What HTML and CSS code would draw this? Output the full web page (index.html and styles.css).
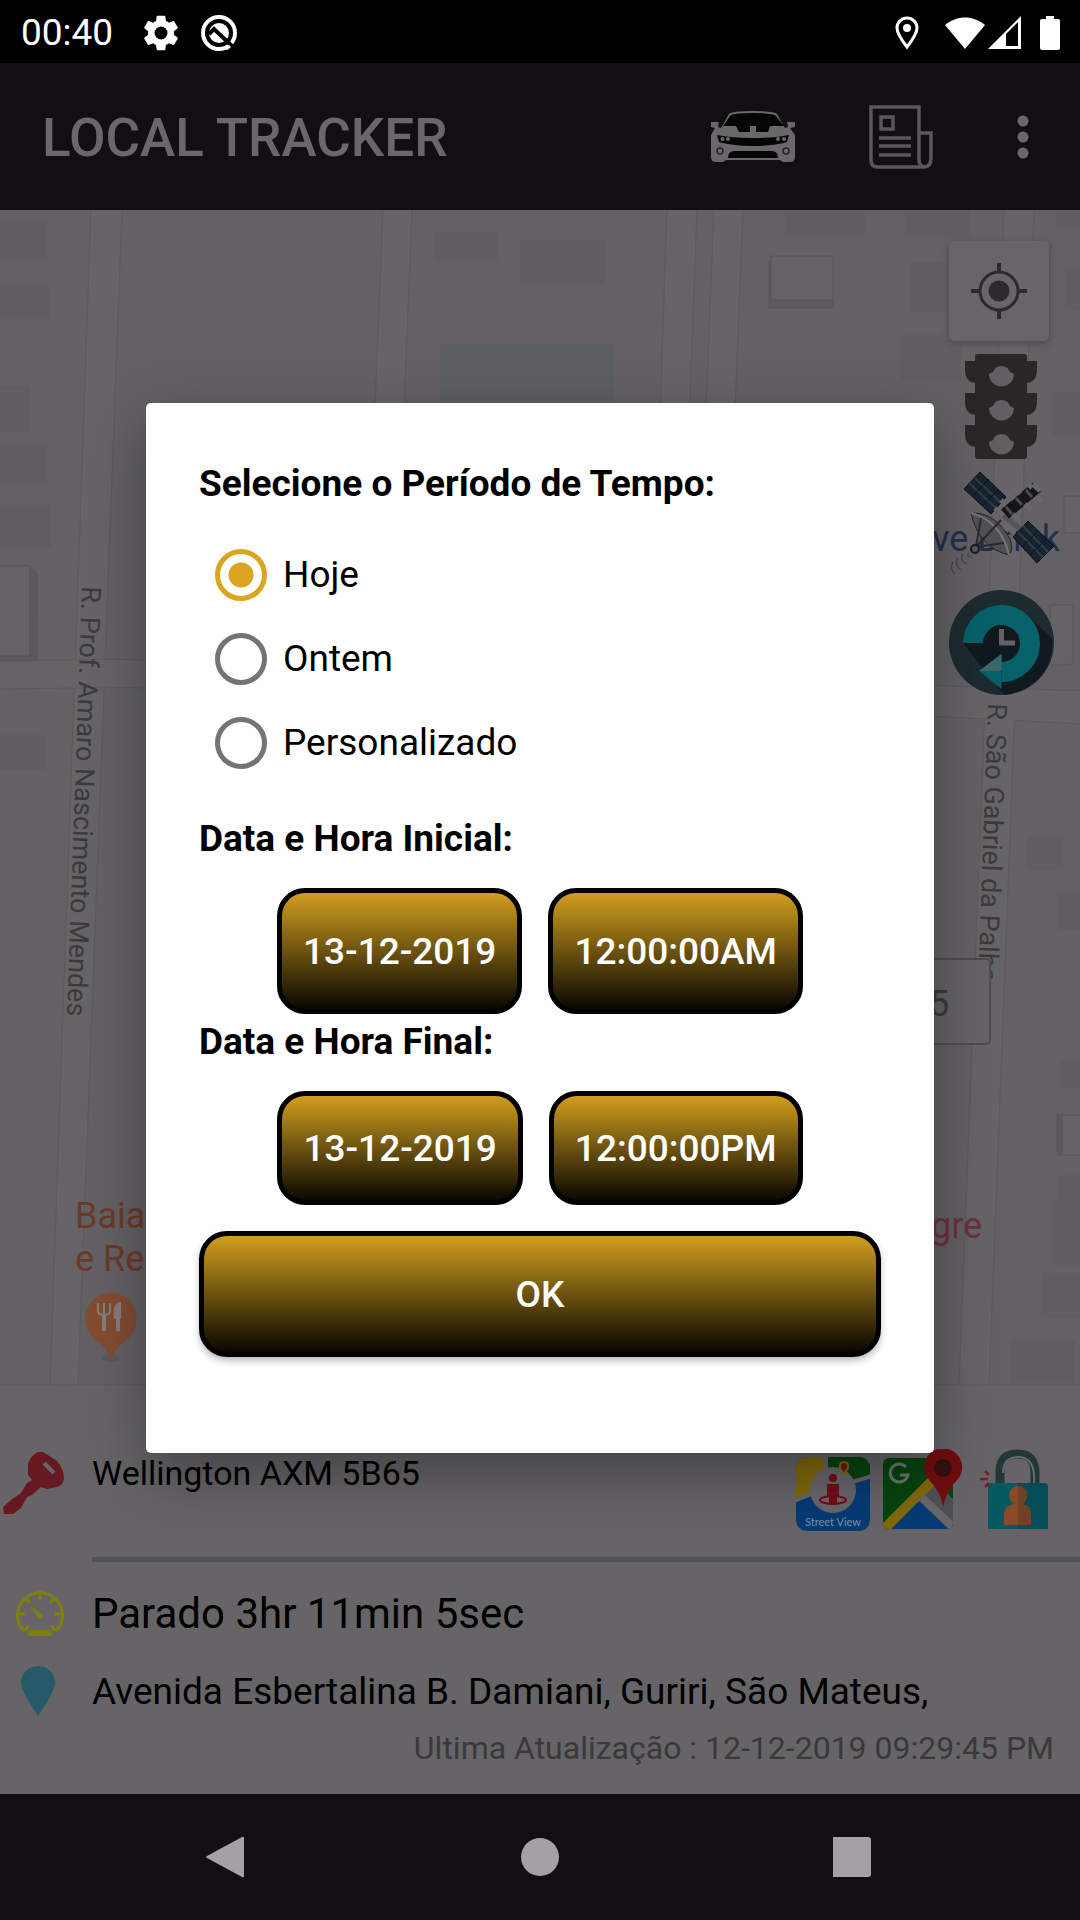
FILE: index.html
```html
<!DOCTYPE html>
<html lang="pt-BR">
<head>
    <meta charset="UTF-8">
    <meta name="viewport" content="width=device-width, initial-scale=1">
    <title>Local Tracker</title>
    <link rel="stylesheet" href="styles.css">
</head>
<body>
    <div class="status-bar">
        <span class="clock">00:40</span>
        <svg class="status-gear" width="36" height="36" viewBox="2 2 20 20" fill="#fff"><path d="M19.14 12.94c.04-.3.06-.61.06-.94s-.02-.64-.07-.94l2.03-1.58a.49.49 0 0 0 .12-.61l-1.92-3.32a.49.49 0 0 0-.59-.22l-2.39.96a7 7 0 0 0-1.62-.94l-.36-2.54a.48.48 0 0 0-.48-.41h-3.84a.48.48 0 0 0-.47.41l-.36 2.54c-.59.24-1.13.57-1.62.94l-2.39-.96a.48.48 0 0 0-.59.22L2.74 8.87a.48.48 0 0 0 .12.61l2.03 1.58c-.05.3-.09.63-.09.94s.02.64.07.94l-2.03 1.58a.49.49 0 0 0-.12.61l1.92 3.32c.12.22.37.29.59.22l2.39-.96c.5.38 1.03.7 1.62.94l.36 2.54c.05.24.24.41.48.41h3.84c.24 0 .44-.17.47-.41l.36-2.54a7 7 0 0 0 1.62-.94l2.39.96c.22.08.47 0 .59-.22l1.92-3.32a.48.48 0 0 0-.12-.61zM12 15.6a3.6 3.6 0 1 1 0-7.2 3.6 3.6 0 0 1 0 7.2z"/></svg>
        <svg class="status-q" width="38" height="38" viewBox="0 0 38 38">
            <circle cx="19" cy="19" r="16" fill="none" stroke="#fff" stroke-width="4"/>
            <circle cx="19" cy="19" r="10" fill="#fff"/>
            <path d="M9 20l5-5 18 17" fill="none" stroke="#000" stroke-width="4"/>
            <path d="M26 35l4-3" stroke="#fff" stroke-width="3"/>
        </svg>
        <div class="status-right">
            <svg width="24" height="34" viewBox="0 0 24 34" fill="none" stroke="#fff" stroke-width="3"><path d="M12 31C5 22 2 17 2 12a10 10 0 0 1 20 0c0 5-3 10-10 19z"/><circle cx="12" cy="12" r="4" fill="#fff" stroke="none"/></svg>
            <svg class="wifi" width="40" height="34" viewBox="0 0 40 34" fill="#fff"><path d="M20 33L0 9C12-1 28-1 40 9z"/></svg>
            <svg class="signal" width="33" height="34" viewBox="0 0 33 34"><path d="M33 0v33H0z" fill="#fff"/><path d="M18 18L30 6v24H18z" fill="#000"/></svg>
            <svg class="battery" width="20" height="34" viewBox="0 0 20 34" fill="#fff"><path d="M6 0h8v3h4a2 2 0 0 1 2 2v27a2 2 0 0 1-2 2H2a2 2 0 0 1-2-2V5a2 2 0 0 1 2-2h4z"/></svg>
        </div>
    </div>

    <div class="screen">
        <header class="app-bar">
            <h1>LOCAL TRACKER</h1>
            <button class="icon-button car" type="button" aria-label="Veículos">
                <svg width="84" height="52" viewBox="0 0 84 52">
                    <path d="M10 17L18 3Q20 0 42 0t24 3l8 14 3-1-1-5h8v5l-5 1 5 7v22q0 5-5 5H72l-3-2H15l-3 2H5q-5 0-5-5V24l4-7-4-1v-5h8l-1 5z" fill="#69676a"/>
                    <path d="M12 15l7-10q2-3 23-3t23 3l8 10H59l-2 6H45v-6h-6v6H28l-3-6z" fill="#060506"/>
                    <path d="M6 24q14 3 36 3t36-3l-2 7q-14 4-34 4T8 31z" fill="#060506"/>
                    <path d="M17 47q0-8 8-7h34q8-1 8 7z" fill="#060506"/>
                    <g fill="#69676a"><circle cx="11.500" cy="28" r="2"/><circle cx="17" cy="28" r="2"/><circle cx="67" cy="28" r="2"/><circle cx="73" cy="28" r="2"/></g>
                    <g fill="none" stroke="#252426" stroke-width="1.500"><circle cx="9" cy="40" r="3"/><circle cx="75" cy="40" r="3"/></g>
                </svg>
            </button>
            <button class="icon-button news" type="button" aria-label="Relatórios">
                <svg width="64" height="64" viewBox="0 0 64 64" fill="none" stroke="#59575a" stroke-width="3.500">
                    <path d="M2 2h48v52q0 8 6 8H9q-7 0-7-7z"/>
                    <path d="M50 28h12v25q0 9-7 9"/>
                    <rect x="12" y="12" width="12" height="12"/>
                    <path d="M10 33h32M10 41h32M10 50h32"/>
                </svg>
            </button>
            <button class="icon-button more" type="button" aria-label="Mais opções">
                <svg width="12" height="44" viewBox="0 0 12 44" fill="#69676a"><circle cx="6" cy="6" r="5.500"/><circle cx="6" cy="22" r="5.500"/><circle cx="6" cy="38" r="5.500"/></svg>
            </button>
        </header>

        <section class="map">
            <svg class="map-canvas" viewBox="0 210 1080 1226" preserveAspectRatio="xMidYMin slice">
                <!-- blocks -->
                <g fill="#605e61">
                    <path d="M0 220h47v40H0zM0 284h49v35H0zM0 386h30v46H0zM0 444h47v40H0zM0 505h51v43H0zM0 735h46v35H0z"/>
                    <path d="M434 232h64v28h-64zM520 240h85v45h-85zM785 210h80v25h-80zM905 210h65v27h-65zM910 262h42v50h-42zM900 335h62v45h-62z"/>
                    <path d="M1056 210h24v18h-24zM1065 268h15v42h-15zM1052 392h28v45h-28z"/>
                    <path d="M1027 836h36v34h-36zM1057 892h23v38h-23zM1060 1060h20v28h-20zM1057 1175h23v90h-28v-65h5zM1041 1273h39v45h-39zM1010 1340h65v43h-65z"/>
                </g>
                <path d="M440 344h175v59H440z" fill="#5e5f60"/>
                <!-- roads -->
                <g fill="#666467" stroke="#5c5a5d">
                    <path d="M91 209L50 1385h28L122 209zM383 209l-12 300h29l12-300zM667 209l-10 300h29l11-300zM714 209l-12 300h29l12-300zM1004 209l-45 1176h30l45-1176z"/>
                    <path d="M-2 660h81l24-1 380 10 600 22v33L700 704 105 687l-25 1-82 1z"/>
                </g>
                <path d="M80 661h26v25H80zM986 692h28v30h-28z" fill="#666467"/>
                <path d="M0 1386h1080v50H0z" fill="#666467"/>
                <path d="M0 1385h50M78 1385h881M989 1385h91" stroke="#5c5a5d"/>
                <!-- raised buildings -->
                <g fill="#656366" stroke="#59575a">
                    <path d="M769 260v48h63l2-7" fill="#5b595c"/>
                    <path d="M771 256h62v44h-62z"/>
                    <path d="M30 567l7 6v48H0v-5h30z" fill="#5b595c"/>
                    <path d="M30 567l7 6v87l-2 1H0v-5h30z" fill="#5b595c"/>
                    <path d="M-1 566h31v90H-1zM1064 496h20v37h-20zM1050 605h23v58l-4 2h-19zM1062 1115h20v40h-20z"/>
                    <path d="M1057 1115h5v40h-5z" fill="#5b595c"/>
                </g>
                <g class="street">
                    <text transform="translate(82 586) rotate(92)">R. Prof. Amaro Nascimento Mendes</text>
                    <text transform="translate(988 703) rotate(92)">R. São Gabriel da Palha</text>
                </g>
                <path d="M880 959h106q4 0 4 4v77q0 4-4 4H880z" fill="#656366" stroke="#4e4c4f" stroke-width="2"/>
                <text class="place marker-title" x="929" y="1016">5</text>
                <text class="place bar" x="932" y="551">ve Drink</text>
                <text class="place shop" x="931" y="1238">gre</text>
                <text class="place food" x="75" y="1228">Baia</text>
                <text class="place food" x="75" y="1271">e Re</text>
                <ellipse cx="111" cy="1358" rx="9" ry="4" fill="#5c5a5c"/>
                <path d="M111 1361q-3-12-12-19a26 26 0 1 1 24 0q-9 7-12 19z" fill="#834c31"/>
                <g stroke="#827e80" fill="none" stroke-width="2"><path d="M98 1303v8q0 4 6 4t6-4v-8M104 1303v12"/><path d="M104 1315v16M118 1318v13" stroke-width="4"/><path d="M120 1303v15h-5q-2-13 5-15z" fill="#827e80"/></g>
            </svg>

            <div class="map-tools">
                <button class="tool locate" type="button" aria-label="Minha localização">
                    <svg width="56" height="56" viewBox="0 0 56 56" fill="none" stroke="#2c2a2d" stroke-width="4"><circle cx="28" cy="28" r="19" stroke-width="3"/><circle cx="28" cy="28" r="10.500" fill="#2c2a2d" stroke="none"/><path d="M28 0v8M28 48v8M0 28h8M48 28h8"/></svg>
                </button>
                <button class="tool" type="button" aria-label="Trânsito">
                    <svg width="105" height="105" viewBox="0 0 105 105">
                        <path d="M26 3q0-3 3-3h46q3 0 3 3v4h10v8q0 13-10 14v10h10v8q0 13-10 14v10h10v8q0 13-10 14v9q0 3-3 3H29q-3 0-3-3v-9q-10-1-10-14v-8h10V61q-10-1-10-14v-8h10V29Q16 28 16 15V7h10z" fill="#2b2528"/>
                        <g fill="#625f62"><path d="M40 20l4-2a9 9 0 0 1 17 0l4 2a12.500 12.500 0 0 1-25 0zM40 54l4-2a9 9 0 0 1 17 0l4 2a12.500 12.500 0 0 1-25 0zM40 88l4-2a9 9 0 0 1 17 0l4 2a12.500 12.500 0 0 1-25 0z"/></g>
                    </svg>
                </button>
                <button class="tool" type="button" aria-label="Satélite">
                    <svg width="105" height="105" viewBox="0 0 105 105">
                        <path d="M45 36L78 62" stroke="#555355" stroke-width="5"/>
                        <g stroke="#0b1218">
                            <path d="M31 0l26 25-15 17L15 17z" fill="#17232e"/>
                            <path d="M26 6l26 25M20 11l27 25" stroke="#2f3d49" stroke-width="2"/>
                            <path d="M24 24l16-17M34 33l16-16" stroke="#0b1218"/>
                            <path d="M79 49l26 25-17 17-24-26z" fill="#17232e"/>
                            <path d="M74 54l25 26M69 60l25 25" stroke="#2f3d49" stroke-width="2"/>
                            <path d="M73 75l16-16M81 83l16-16" stroke="#0b1218"/>
                        </g>
                        <path d="M56 42L88 15" stroke="#151416" stroke-width="12"/>
                        <path d="M46 36l8 8M52 28l5 5M64 42l6 6M66 17l5 5M76 32l6 6M60 22l5 5M78 11l5 5M88 25l5 4M84 12l7 7M56 52l9 9" stroke="#69676b" stroke-width="5"/>
                        <path d="M57 35l6 7M67 26l6 7M77 18l6 7" stroke="#4b494c" stroke-width="3"/>
                        <path d="M22 41q24-1 39 26 4 10-1 16Q30 76 22 41z" fill="#515052" stroke="#252426"/>
                        <path d="M22 41q30 8 38 42" fill="none" stroke="#777578" stroke-width="2"/>
                        <path d="M27 75l5-29M27 75l28-4M27 75l25-27" stroke="#2b292c" stroke-width="2"/>
                        <circle cx="26" cy="77" r="4" fill="#555355" stroke="#1d1b1e" stroke-width="2"/>
                        <path d="M20 80q-3 5 3 6M14 82q-4 7 4 10M9 86q-4 7 3 12M4 90q-4 6 2 12" fill="none" stroke="#4c4a4d" stroke-width="1.500"/>
                    </svg>
                </button>
                <button class="tool" type="button" aria-label="Histórico">
                    <svg width="105" height="105" viewBox="0 0 105 105">
                        <circle cx="52.500" cy="52.500" r="52.500" fill="#1d2b30"/>
                        <path d="M80 26l23 23a52 52 0 0 1-48 56L14 53h22z" fill="#10191e"/>
                        <circle cx="52.500" cy="52.500" r="20" fill="#10191e"/>
                        <path d="M24 53a28.500 28.500 0 1 1 28.500 29" fill="none" stroke="#07616a" stroke-width="20"/>
                        <path d="M52.500 64v35L30 81z" fill="#07616a"/>
                        <path d="M52.500 64v17H30z" fill="#3b696b"/>
                        <path d="M52.500 39v14H66" fill="none" stroke="#646265" stroke-width="5"/>
                    </svg>
                </button>
            </div>
        </section>

        <section class="vehicle">
            <div class="vehicle-head">
                <svg class="key" width="62" height="62" viewBox="0 0 62 62">
                    <path d="M25 12q2-8 10-12h5l14 9q7 8 7 18-1 6-7 8l-10 2-6-2-9 8-5 2-6 11-8 6H1l-1-7 8-7 10-7 6-10 5-3-4-5z" fill="#671821"/>
                    <path d="M41 11l10 10" stroke="#686568" stroke-width="4"/>
                </svg>
                <span class="vehicle-name">Wellington AXM 5B65</span>
                <div class="vehicle-actions">
                    <button class="icon-button" type="button" aria-label="Street View">
                        <svg width="74" height="82" viewBox="0 0 74 82">
                            <clipPath id="sv"><rect y="8" width="74" height="74" rx="11"/></clipPath>
                            <g clip-path="url(#sv)">
                                <path d="M0 0h74v82H0z" fill="#073b75"/>
                                <path d="M0 0h30v40L0 51z" fill="#80690c"/>
                                <path d="M30 0h44v27L30 42z" fill="#06440f"/>
                                <path d="M-2 52l32-13V0M50 35l26-8" fill="none" stroke="#66676b" stroke-width="4"/>
                            </g>
                            <circle cx="37" cy="41" r="23" fill="#686669"/>
                            <g fill="#740c17"><circle cx="37" cy="29" r="4"/><path d="M31 35h12v12h-2v7h-8v-7h-2z"/></g>
                            <ellipse cx="37" cy="51" rx="13" ry="4" fill="none" stroke="#740c17" stroke-width="2"/>
                            <path d="M48 25l-4-6q-1-6 4-6t4 6z" fill="#6e1612" stroke="#80690c" stroke-width="2"/>
                            <text x="37" y="77" text-anchor="middle" class="sv-label">Street View</text>
                        </svg>
                    </button>
                    <button class="icon-button" type="button" aria-label="Google Maps">
                        <svg width="84" height="80" viewBox="0 0 84 80">
                            <clipPath id="gm"><rect y="9" width="70" height="71" rx="6"/></clipPath>
                            <g clip-path="url(#gm)">
                                <path d="M0 0h70v80H0z" fill="#06440f"/>
                                <path d="M48 28l22 22v30H0z" fill="#504f52"/>
                                <path d="M36 51l29 29H8z" fill="#073b75"/>
                                <path d="M1 80l48-48" stroke="#80690c" stroke-width="10"/>
                                <path d="M38 48l33 31" stroke="#69676b" stroke-width="8"/>
                            </g>
                            <path d="M23 18a9 9 0 1 0 2 8h-8" fill="none" stroke="#69786c" stroke-width="3"/>
                            <path d="M60 58q-1-13-13-26A19 19 0 1 1 75 30q-12 12-15 28z" fill="#700d10"/>
                            <circle cx="60" cy="19" r="9" fill="#36100f"/>
                        </svg>
                    </button>
                    <button class="icon-button" type="button" aria-label="Desbloquear">
                        <svg width="68" height="80" viewBox="0 0 68 80">
                            <path d="M20 34V21Q21 5 38 5t17 19v12" fill="none" stroke="#253638" stroke-width="9"/>
                            <path d="M23 24q0-15 14-16 19-1 17 27" fill="none" stroke="#607071" stroke-width="2"/>
                            <path d="M8 38q0-4 4-4h52q4 0 4 4v42H8z" fill="#064c54"/>
                            <path d="M12 34h26v46H8V38q0-4 4-4z" fill="#075960"/>
                            <path d="M24 76V66q0-9 10-11-5-4-5-9a9 9 0 0 1 18 0q0 5-4 9 8 2 8 11v10z" fill="#8b4a26"/>
                            <path d="M38 37a9 9 0 0 1 9 9q0 5-4 9 8 2 8 11v10H38z" fill="#704127"/>
                            <path d="M9 26l-4-4M8 30H0M9 34l-4 4" stroke="#781e2c" stroke-width="2.500"/>
                        </svg>
                    </button>
                </div>
            </div>
            <div class="vehicle-row state">
                <svg class="gauge" width="48" height="48" viewBox="0 0 48 48" fill="none" stroke="#7f8008" stroke-width="3">
                    <path d="M11 40l-4 1a22.500 22.500 0 1 1 34 0l-4-1-1-4M11 40l1-4M24 2v8M9 9l5 5M39 9l-5 5M2 25h7M46 25h-7"/>
                    <path d="M15 18l6 8q1 3 4 4 2-1 1-3l-5-5z" fill="#7f8008" stroke-width="1"/>
                    <path d="M15 44h18" stroke-width="6" stroke-linecap="round"/>
                </svg>
                <span>Parado 3hr 11min 5sec</span>
            </div>
            <div class="vehicle-row address">
                <svg class="address-pin" width="34" height="50" viewBox="0 0 34 50" fill="#265a6b"><path d="M17 50Q0 25 0 17a17 17 0 0 1 34 0q0 8-17 33z"/></svg>
                <span>Avenida Esbertalina B. Damiani, Guriri, São Mateus,</span>
            </div>
            <p class="updated">Ultima Atualização : 12-12-2019 09:29:45 PM</p>
        </section>

        <div class="overlay">
            <form class="dialog" role="dialog" aria-labelledby="periodTitle">
                <h2 id="periodTitle">Selecione o Período de Tempo:</h2>
                <div class="options" role="radiogroup" aria-labelledby="periodTitle">
                    <label class="option"><input type="radio" name="periodo" value="hoje" checked>Hoje</label>
                    <label class="option"><input type="radio" name="periodo" value="ontem">Ontem</label>
                    <label class="option"><input type="radio" name="periodo" value="personalizado">Personalizado</label>
                </div>

                <h2>Data e Hora Inicial:</h2>
                <div class="date-row">
                    <button class="gold" type="button">13-12-2019</button>
                    <button class="gold" type="button">12:00:00AM</button>
                </div>

                <h2>Data e Hora Final:</h2>
                <div class="date-row final">
                    <button class="gold" type="button">13-12-2019</button>
                    <button class="gold" type="button">12:00:00PM</button>
                </div>

                <button class="gold ok" type="button">OK</button>
            </form>
        </div>
    </div>

    <nav class="nav-bar">
        <button class="icon-button" type="button" aria-label="Voltar"><svg width="44" height="44" viewBox="0 0 44 44" fill="#a3a1a4"><path d="M39 2q2-1 2 1v38q0 2-2 1L4 23q-2-1 0-2z"/></svg></button>
        <button class="icon-button" type="button" aria-label="Início"><svg width="44" height="44" viewBox="0 0 44 44" fill="#a3a1a4"><circle cx="22" cy="22" r="19"/></svg></button>
        <button class="icon-button" type="button" aria-label="Recentes"><svg width="44" height="44" viewBox="4 0 44 44" fill="#a3a1a4"><rect x="2" y="2" width="40" height="40" rx="3"/></svg></button>
    </nav>
</body>
</html>
```

FILE: styles.css
```css
* {
    box-sizing: border-box;
}
body {
    margin: 0;
    height: 100vh;
    display: flex;
    flex-direction: column;
    font-family: Roboto, "Noto Sans", sans-serif;
    font-size: 37px;
    color: #000;
    background: #110f11;
}
svg {
    display: block;
    flex-shrink: 0;
}
h1, h2, p {
    margin: 0;
}
button {
    font-family: inherit;
    cursor: pointer;
}
.icon-button {
    padding: 0;
    border: none;
    background: none;
}

/* status bar */
.status-bar {
    display: flex;
    align-items: center;
    height: 63px;
    padding: 2px 20px 0 21px;
    background: #000;
    color: #fff;
}
.status-gear {
    margin-left: 30px;
}
.status-q {
    margin-left: 21px;
}
.status-right {
    display: flex;
    align-items: center;
    margin-left: auto;
}
.wifi {
    margin-left: 26px;
}
.signal {
    margin-left: 3px;
}
.battery {
    margin-left: 19px;
}

.screen {
    position: relative;
    flex: 1;
    min-height: 0;
    display: flex;
    flex-direction: column;
}

/* app bar */
.app-bar {
    display: flex;
    align-items: center;
    height: 147px;
    padding: 0 51px 0 42px;
    background: #110f11;
    color: #69676a;
}
.app-bar h1 {
    flex: 1;
    padding-top: 3px;
    font-size: 53px;
    font-weight: 500;
}
.news {
    margin-left: 74px;
}
.more {
    margin-left: 84px;
}

/* map */
.map {
    position: relative;
    flex: 1;
    min-height: 0;
    background: #636164;
}
.map-canvas {
    width: 100%;
    height: 100%;
}
.street {
    font-size: 27px;
    fill: #3c3a3d;
}
.place {
    font-size: 36px;
}
.marker-title {
    fill: #3c3a3d;
}
.bar {
    fill: #22304f;
}
.shop {
    fill: #6d3040;
}
.food {
    fill: #6c3a28;
}
.map-tools {
    position: absolute;
    top: 31px;
    right: 26px;
    display: flex;
    flex-direction: column;
    align-items: flex-start;
    gap: 13px;
}
.tool {
    padding: 0;
    border: none;
    background: none;
}
.locate {
    display: flex;
    align-items: center;
    justify-content: center;
    width: 100px;
    height: 100px;
    border-radius: 5px;
    background: #676568;
    box-shadow: 0 2px 6px #4b494c;
}

/* vehicle panel */
.vehicle {
    height: 358px;
    background: #666467;
}
.vehicle-head {
    display: flex;
    align-items: flex-start;
    height: 126px;
    padding: 16px 32px 0 3px;
    background: linear-gradient(#525153, #525153) 92px 100% / 100% 5px no-repeat;
}
.vehicle-name {
    flex: 1;
    margin-left: 27px;
    font-size: 34px;
    line-height: 42px;
}
.vehicle-actions {
    display: flex;
    align-items: flex-start;
    gap: 13px;
    margin-top: -3px;
}
.sv-label {
    font: 11px Lato, sans-serif;
    fill: #7890a8;
}
.vehicle-row {
    display: grid;
    grid-template-columns: 92px 1fr;
    align-items: center;
}
.state {
    height: 102px;
    font-size: 42px;
}
.address {
    height: 54px;
}
.gauge {
    margin-left: 16px;
}
.address-pin {
    margin-left: 21px;
}
.updated {
    padding-right: 26px;
    margin-top: 10px;
    text-align: right;
    font-size: 32px;
    line-height: 40px;
    color: #3a383b;
}

/* period dialog */
.overlay {
    position: absolute;
    inset: 0;
    display: flex;
    align-items: center;
    justify-content: center;
    padding-bottom: 2px;
}
.dialog {
    width: 90%;
    max-width: 788px;
    padding: 59px 53px 96px;
    border-radius: 5px;
    background: #fefefe;
    box-shadow: 0 20px 60px rgba(0, 0, 0, 0.35);
}
.dialog h2 {
    font-size: 37px;
    line-height: 44px;
}
.options {
    padding: 27px 0 32px 16px;
}
.option {
    display: flex;
    align-items: center;
    gap: 16px;
    height: 84px;
    line-height: 48px;
}
.option input {
    appearance: none;
    width: 52px;
    height: 52px;
    margin: 0;
    border: 5px solid #757376;
    border-radius: 50%;
}
.option input:checked {
    border-color: #daa520;
    background: radial-gradient(#daa520 12px, transparent 13px);
}
.date-row {
    display: flex;
    justify-content: center;
    gap: 26px;
    margin: 27px 0 6px;
}
.gold {
    height: 126px;
    padding: 2px 21px 0;
    border: 5px solid #000;
    border-radius: 28px;
    background: linear-gradient(#daa520, #000);
    background-origin: border-box;
    color: #fff;
    font-size: 37px;
    font-weight: 500;
}
.final {
    margin-bottom: 26px;
}
.final .gold {
    height: 114px;
}
.ok {
    display: block;
    width: 100%;
    box-shadow: 0 4px 6px rgba(0, 0, 0, 0.25);
}

/* navigation bar */
.nav-bar {
    display: grid;
    grid-template-columns: repeat(3, 1fr);
    justify-items: center;
    align-items: center;
    height: 126px;
    padding: 0 68px;
    background: #110f11;
}
```
